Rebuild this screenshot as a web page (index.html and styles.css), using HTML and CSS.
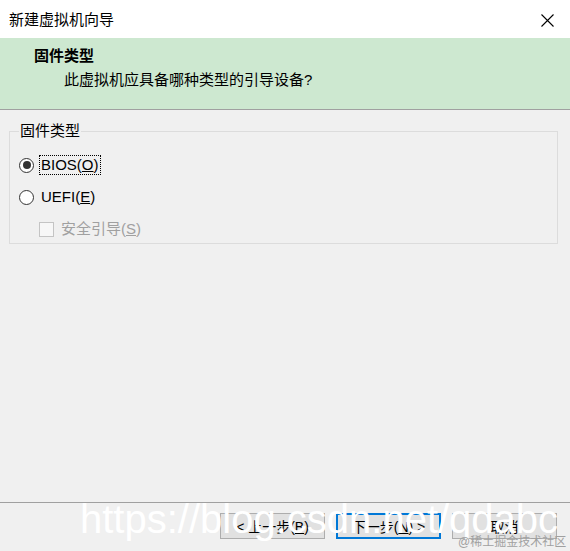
FILE: index.html
```html
<!DOCTYPE html>
<html lang="zh-CN">
<head>
    <meta charset="UTF-8">
    <meta name="viewport" content="width=device-width, initial-scale=1.0">
    <title>新建虚拟机向导</title>
    <link rel="stylesheet" href="styles.css">
</head>
<body>
    <div class="dialog">
        <div class="titlebar">
            <span class="title">新建虚拟机向导</span>
            <svg class="close" width="13" height="13" viewBox="0 0 13 13">
                <path d="M0.5 0.5 L12.5 12.5 M12.5 0.5 L0.5 12.5" stroke="#000" stroke-width="1.1" fill="none"/>
            </svg>
        </div>

        <div class="header">
            <div class="header-title">固件类型</div>
            <div class="header-desc">此虚拟机应具备哪种类型的引导设备?</div>
        </div>

        <div class="content">
            <fieldset class="group">
                <legend>固件类型</legend>
                <label class="option">
                    <input type="radio" name="firmware" checked>
                    <span class="focus">BIOS(<u>O</u>)</span>
                </label>
                <label class="option">
                    <input type="radio" name="firmware">
                    <span class="text">UEFI(<u>E</u>)</span>
                </label>
                <label class="option sub disabled">
                    <input type="checkbox" disabled>
                    <span class="text">安全引导(<u>S</u>)</span>
                </label>
            </fieldset>
        </div>

        <div class="footer">
            <button type="button">&lt; 上一步(<u>B</u>)</button>
            <button type="button" class="primary">下一步(<u>N</u>) &gt;</button>
            <button type="button">取消</button>
        </div>

        <!-- watermark over the screenshot -->
        <div class="watermark">https://blog.csdn.net/qdabc</div>
        <div class="watermark-small">@稀土掘金技术社区</div>
    </div>
</body>
</html>
```

FILE: styles.css
```css
body {
    margin: 0;
    background: #f0f0f0;
    font-family: "Liberation Sans", "Noto Sans CJK SC", sans-serif;
    font-size: 15px;
    color: #000;
}
.dialog {
    position: relative;
    height: 551px;
    display: flex;
    flex-direction: column;
    overflow: hidden;
}
.titlebar {
    height: 38px;
    box-sizing: border-box;
    padding: 2px 16px 0 9px;
    background: #fff;
    display: flex;
    align-items: center;
    justify-content: space-between;
}
.title {
    line-height: 20px;
}
.close {
    display: block;
}
.header {
    height: 72px;
    box-sizing: border-box;
    padding-top: 8px;
    background: #cde8d0;
    border-bottom: 1px solid #a0a0a0;
}
.header-title {
    font-weight: bold;
    line-height: 20px;
    padding-left: 34px;
}
.header-desc {
    line-height: 20px;
    margin-top: 4px;
    padding-left: 64px;
}
.content {
    padding: 0 12px 0 9px;
}
.group {
    margin: 11px 0 0 0;
    padding: 0 0 4px 9px;
    border: 1px solid #dcdcdc;
    min-width: 0;
}
.group legend {
    padding: 0 1px;
    line-height: 20px;
}
.option {
    display: flex;
    align-items: center;
    height: 20px;
    margin-top: 12px;
}
.option:first-of-type {
    margin-top: 14px;
}
.option input {
    appearance: none;
    -webkit-appearance: none;
    margin: 0 5px 0 0;
    width: 15px;
    height: 15px;
    box-sizing: border-box;
    background: #fff;
    border: 1px solid #333;
    flex: none;
}
.option input[type="radio"] {
    border-radius: 50%;
    position: relative;
}
.option input[type="radio"]:checked::after {
    content: "";
    position: absolute;
    left: 2.5px;
    top: 2.5px;
    width: 8px;
    height: 8px;
    border-radius: 50%;
    background: #333;
}
.option .focus {
    border: 1px dotted #000;
    padding: 0 1px;
    line-height: 18px;
}
.option .text {
    padding-left: 2px;
    line-height: 20px;
}
.option.sub input {
    margin-left: 20px;
}
.option.disabled {
    color: #a0a0a0;
}
.option.disabled input {
    border-color: #c4c4c4;
    background: #f7f7f7;
}
.footer {
    margin-top: auto;
    border-top: 1px solid #a0a0a0;
    padding: 10px 13px 12px 0;
    display: flex;
    justify-content: flex-end;
    gap: 11px;
}
.footer button {
    width: 105px;
    height: 26px;
    box-sizing: border-box;
    background: #e1e1e1;
    border: 1px solid #adadad;
    font-family: inherit;
    font-size: 14px;
    color: #000;
    padding: 0;
}
.footer button.primary {
    border: 2px solid #0078d7;
}
.watermark {
    position: absolute;
    left: 80px;
    top: 499px;
    font-size: 40px;
    line-height: 40px;
    color: #fff;
    white-space: nowrap;
}
.watermark-small {
    position: absolute;
    left: 458px;
    top: 534px;
    font-size: 12px;
    line-height: 16px;
    color: #a0a0a0;
    white-space: nowrap;
}
```
